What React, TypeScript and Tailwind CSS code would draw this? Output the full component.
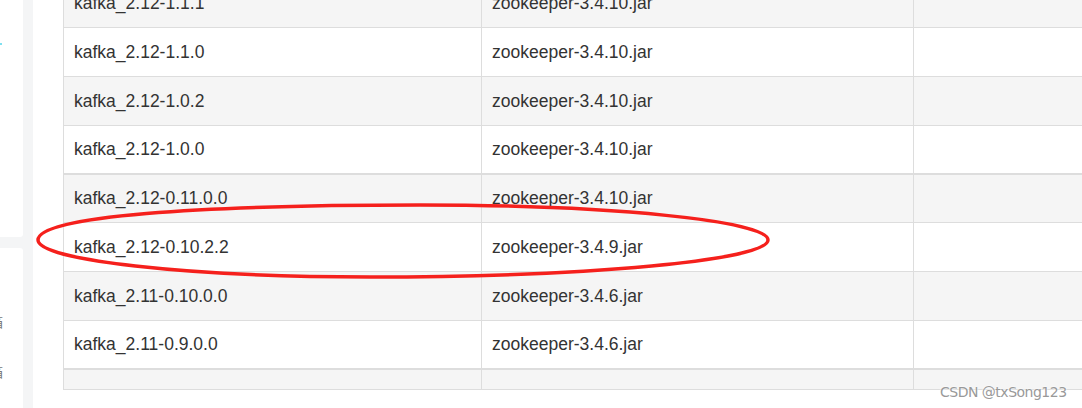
const rows = [
  { a: "kafka_2.12-1.1.1", b: "zookeeper-3.4.10.jar", h: "h-[49px]", bg: "bg-[#f5f5f5]", thick: false },
  { a: "kafka_2.12-1.1.0", b: "zookeeper-3.4.10.jar", h: "h-[49px]", bg: "bg-white", thick: false },
  { a: "kafka_2.12-1.0.2", b: "zookeeper-3.4.10.jar", h: "h-[49px]", bg: "bg-[#f5f5f5]", thick: false },
  { a: "kafka_2.12-1.0.0", b: "zookeeper-3.4.10.jar", h: "h-[48px]", bg: "bg-white", thick: false },
  { a: "kafka_2.12-0.11.0.0", b: "zookeeper-3.4.10.jar", h: "h-[49px]", bg: "bg-[#f5f5f5]", thick: true },
  { a: "kafka_2.12-0.10.2.2", b: "zookeeper-3.4.9.jar", h: "h-[49px]", bg: "bg-white", thick: false },
  { a: "kafka_2.11-0.10.0.0", b: "zookeeper-3.4.6.jar", h: "h-[49px]", bg: "bg-[#f5f5f5]", thick: false },
  { a: "kafka_2.11-0.9.0.0", b: "zookeeper-3.4.6.jar", h: "h-[48px]", bg: "bg-white", thick: false },
  { a: "", b: "", h: "h-[21px]", bg: "bg-[#f5f5f5]", thick: true },
];

function Sidebar() {
  return (
    <div className="flex h-full w-[23px] shrink-0 flex-col">
      <div className="h-[237px] rounded-br-[3px] bg-white">
        <div className="mt-[43px] h-[2px] w-[2px] bg-[#7fe0f0]" />
      </div>
      <div className="h-[11px]" />
      <div className="flex-1 overflow-hidden rounded-tr-[3px] bg-white pt-[68px]">
        <div className="flex flex-col gap-[38px]">
          <span className="-ml-[10px] text-[13px] leading-[12px] text-[#777] [font-family:'Noto_Sans_CJK_SC',sans-serif]">箱</span>
          <span className="-ml-[10px] text-[13px] leading-[12px] text-[#777] [font-family:'Noto_Sans_CJK_SC',sans-serif]">箱</span>
        </div>
      </div>
    </div>
  );
}

export default function App() {
  return (
    <div className="relative flex h-[408px] w-[1082px] overflow-hidden bg-[#f4f5f6] [font-family:'Liberation_Sans',Arial,sans-serif]">
      <Sidebar />
      <div className="w-[10px] shrink-0" />
      <div className="flex-1 overflow-hidden bg-white pl-[30px]">
        <div className="-mt-[22px] w-[1150px] border-b border-l border-[#dddddd]">
          {rows.map((r, i) => (
            <div
              key={i}
              className={`grid grid-cols-[417px_432px_1fr] border-[#dddddd] ${r.h} ${r.bg} ${r.thick ? "border-t-2" : "border-t"}`}
            >
              <div className="flex items-center pl-[10px] text-[17.5px] text-[#333]">{r.a}</div>
              <div className="flex items-center border-l border-[#dddddd] pl-[10px] text-[17.5px] text-[#333]">{r.b}</div>
              <div className="border-l border-[#dddddd]" />
            </div>
          ))}
        </div>
      </div>

      <svg className="pointer-events-none absolute left-0 top-0" width="1082" height="408">
        <path
          d="M38 240 C38 216 200 205 420 205 C612 205 768 221 768 240 C768 260 590 277 370 277 C187 277 38 260 38 240 Z"
          fill="none"
          stroke="#f5201c"
          strokeWidth="3.5"
        />
      </svg>

      <div className="absolute left-[940px] top-[382px] text-[14px] text-[#999] [text-shadow:0_0_2px_#fff,0_0_2px_#fff] [font-family:'DejaVu_Sans',sans-serif] tracking-[-0.5px]">
        CSDN @txSong123
      </div>
    </div>
  );
}
